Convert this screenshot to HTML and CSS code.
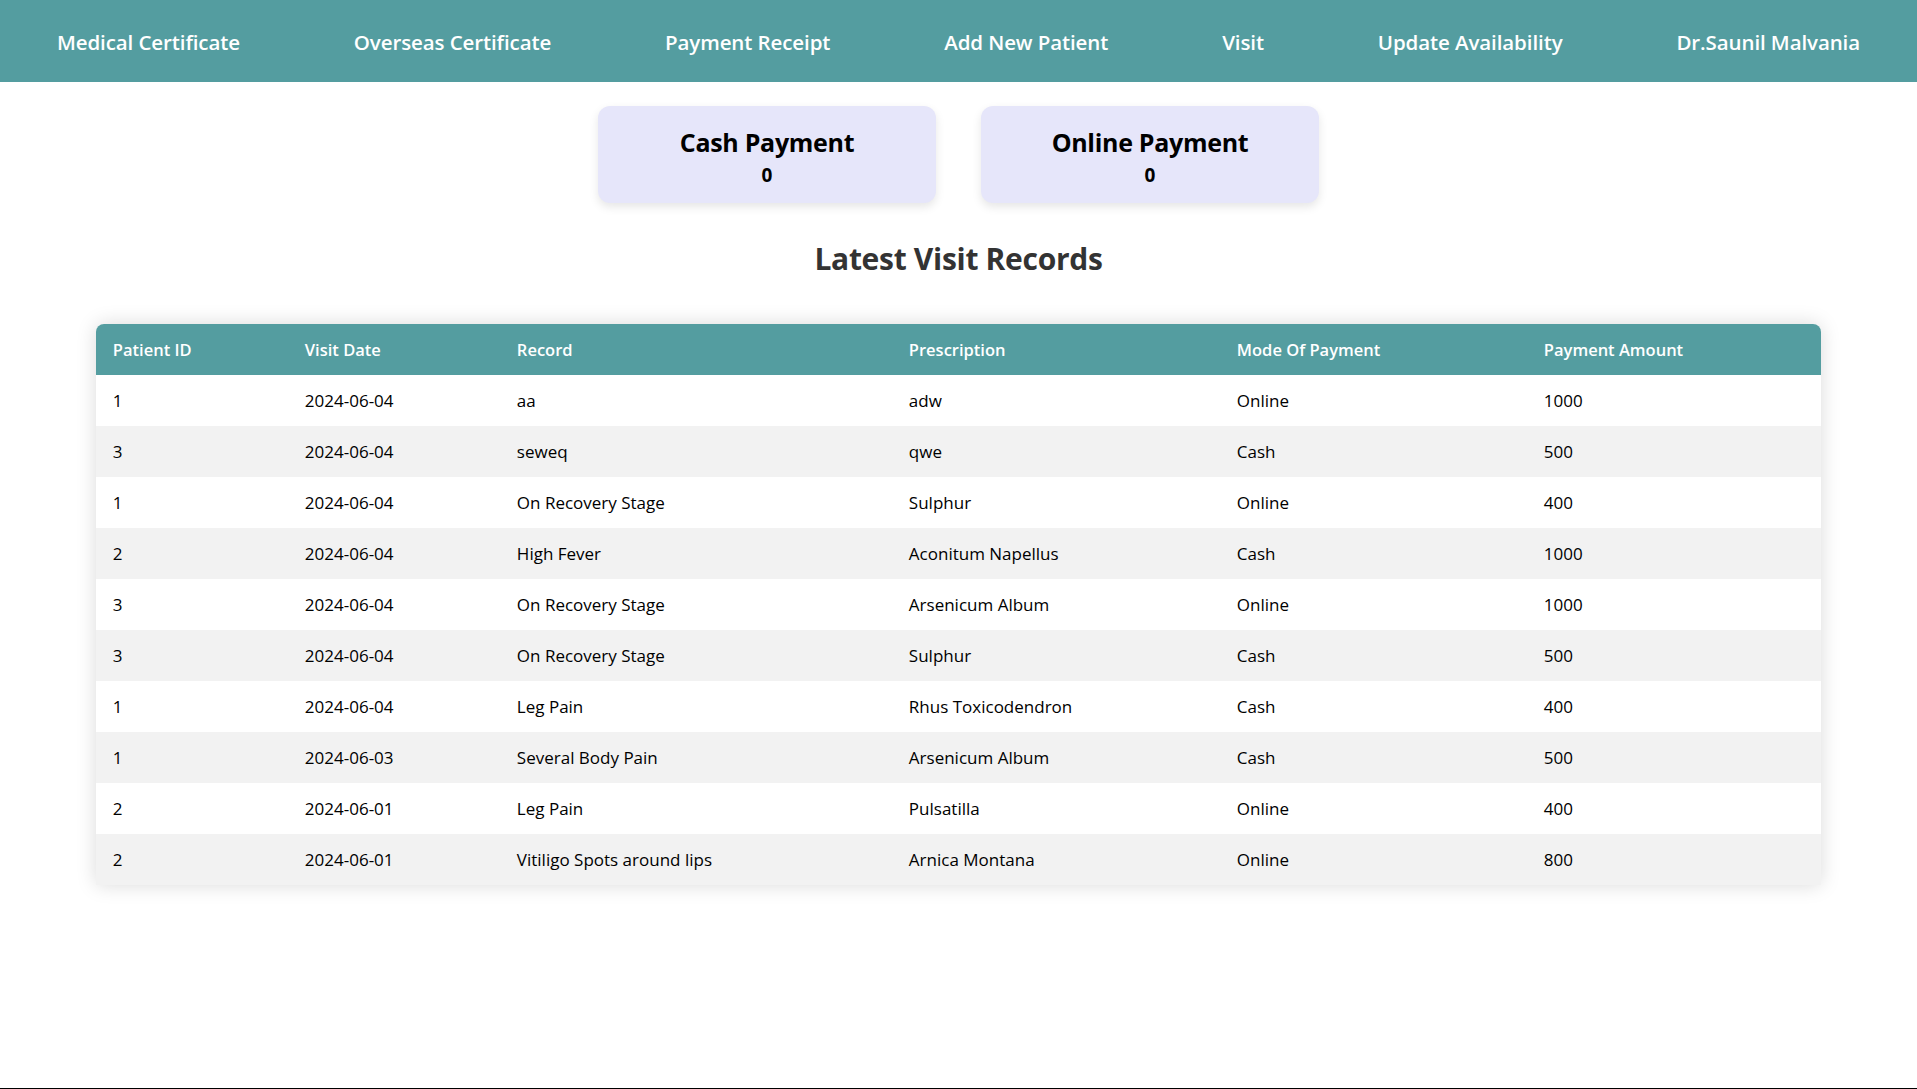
FILE: index.html
```html
<!DOCTYPE html>
<html lang="en">
<head>
<meta charset="utf-8">
<title>Dashboard</title>
<link rel="stylesheet" href="styles.css">
</head>
<body>
<div class="page">
  <nav class="topnav">
    <a class="nav-link" href="#">Medical Certificate</a>
    <a class="nav-link" href="#">Overseas Certificate</a>
    <a class="nav-link" href="#">Payment Receipt</a>
    <a class="nav-link" href="#">Add New Patient</a>
    <a class="nav-link" href="#">Visit</a>
    <a class="nav-link" href="#">Update Availability</a>
    <a class="nav-link" href="#">Dr.Saunil Malvania</a>
  </nav>

  <section class="summary">
    <div class="card">
      <div class="card-title">Cash Payment</div>
      <div class="card-value">0</div>
    </div>
    <div class="card">
      <div class="card-title">Online Payment</div>
      <div class="card-value">0</div>
    </div>
  </section>

  <h2 class="section-title">Latest Visit Records</h2>

  <div class="table-wrap">
    <table class="records">
      <colgroup>
        <col class="c-id"><col class="c-date"><col class="c-record"><col class="c-presc"><col class="c-mode"><col class="c-amount">
      </colgroup>
      <thead>
        <tr><th>Patient ID</th><th>Visit Date</th><th>Record</th><th>Prescription</th><th>Mode Of Payment</th><th>Payment Amount</th></tr>
      </thead>
      <tbody>
        <tr><td>1</td><td>2024-06-04</td><td>aa</td><td>adw</td><td>Online</td><td>1000</td></tr>
        <tr><td>3</td><td>2024-06-04</td><td>seweq</td><td>qwe</td><td>Cash</td><td>500</td></tr>
        <tr><td>1</td><td>2024-06-04</td><td>On Recovery Stage</td><td>Sulphur</td><td>Online</td><td>400</td></tr>
        <tr><td>2</td><td>2024-06-04</td><td>High Fever</td><td>Aconitum Napellus</td><td>Cash</td><td>1000</td></tr>
        <tr><td>3</td><td>2024-06-04</td><td>On Recovery Stage</td><td>Arsenicum Album</td><td>Online</td><td>1000</td></tr>
        <tr><td>3</td><td>2024-06-04</td><td>On Recovery Stage</td><td>Sulphur</td><td>Cash</td><td>500</td></tr>
        <tr><td>1</td><td>2024-06-04</td><td>Leg Pain</td><td>Rhus Toxicodendron</td><td>Cash</td><td>400</td></tr>
        <tr><td>1</td><td>2024-06-03</td><td>Several Body Pain</td><td>Arsenicum Album</td><td>Cash</td><td>500</td></tr>
        <tr><td>2</td><td>2024-06-01</td><td>Leg Pain</td><td>Pulsatilla</td><td>Online</td><td>400</td></tr>
        <tr><td>2</td><td>2024-06-01</td><td>Vitiligo Spots around lips</td><td>Arnica Montana</td><td>Online</td><td>800</td></tr>
      </tbody>
    </table>
  </div>
</div>
</body>
</html>
```

FILE: styles.css
```css
* { box-sizing: border-box; }
html, body { margin: 0; padding: 0; }
body {
  font-family: "Open Sans", "Noto Sans", "Liberation Sans", sans-serif;
  color: #000;
  background: #fff;
}
.page {
  min-height: 100vh;
  border-bottom: 1px solid #000;
}
.topnav {
  height: 82px;
  background: #549da0;
  display: flex;
  justify-content: space-around;
  align-items: center;
  padding-top: 2px;
}
.nav-link {
  color: #fff;
  text-decoration: none;
  font-size: 20.5px;
  font-weight: 600;
  letter-spacing: -0.1px;
}
.summary {
  display: flex;
  justify-content: center;
  gap: 45px;
  margin-top: 24px;
}
.card {
  width: 338px;
  height: 97px;
  background: #e6e6fa;
  border-radius: 12px;
  box-shadow: 0 4px 10px rgba(0, 0, 0, 0.1);
  display: flex;
  flex-direction: column;
  align-items: center;
  justify-content: center;
  padding-top: 4px;
}
.card-title {
  font-size: 25px;
  font-weight: 700;
  line-height: 32px;
  letter-spacing: -0.3px;
}
.card-value {
  font-size: 19px;
  font-weight: 700;
  line-height: 24px;
  margin-top: 5px;
}
.section-title {
  text-align: center;
  color: #333;
  font-size: 30px;
  font-weight: 700;
  line-height: 44px;
  margin: 34px 0 0;
  letter-spacing: -0.3px;
}
.table-wrap {
  width: 90%;
  margin: 43px auto 0;
  border-radius: 8px 8px 0 0;
  overflow: hidden;
  box-shadow: 0 0 20px rgba(0, 0, 0, 0.15);
}
.records {
  width: 100%;
  border-collapse: collapse;
  table-layout: fixed;
  font-size: 17px;
}
.c-id { width: 192px; }
.c-date { width: 212px; }
.c-record { width: 392px; }
.c-presc { width: 328px; }
.c-mode { width: 307px; }
.c-amount { width: auto; }
.records th,
.records td {
  text-align: left;
  padding: 14px 17px;
  line-height: 23px;
  white-space: nowrap;
}
.records th {
  background: #549da0;
  color: #fff;
  font-weight: 600;
  font-size: 16.5px;
}
.records tbody tr:nth-child(even) td {
  background: #f2f2f2;
}
```
